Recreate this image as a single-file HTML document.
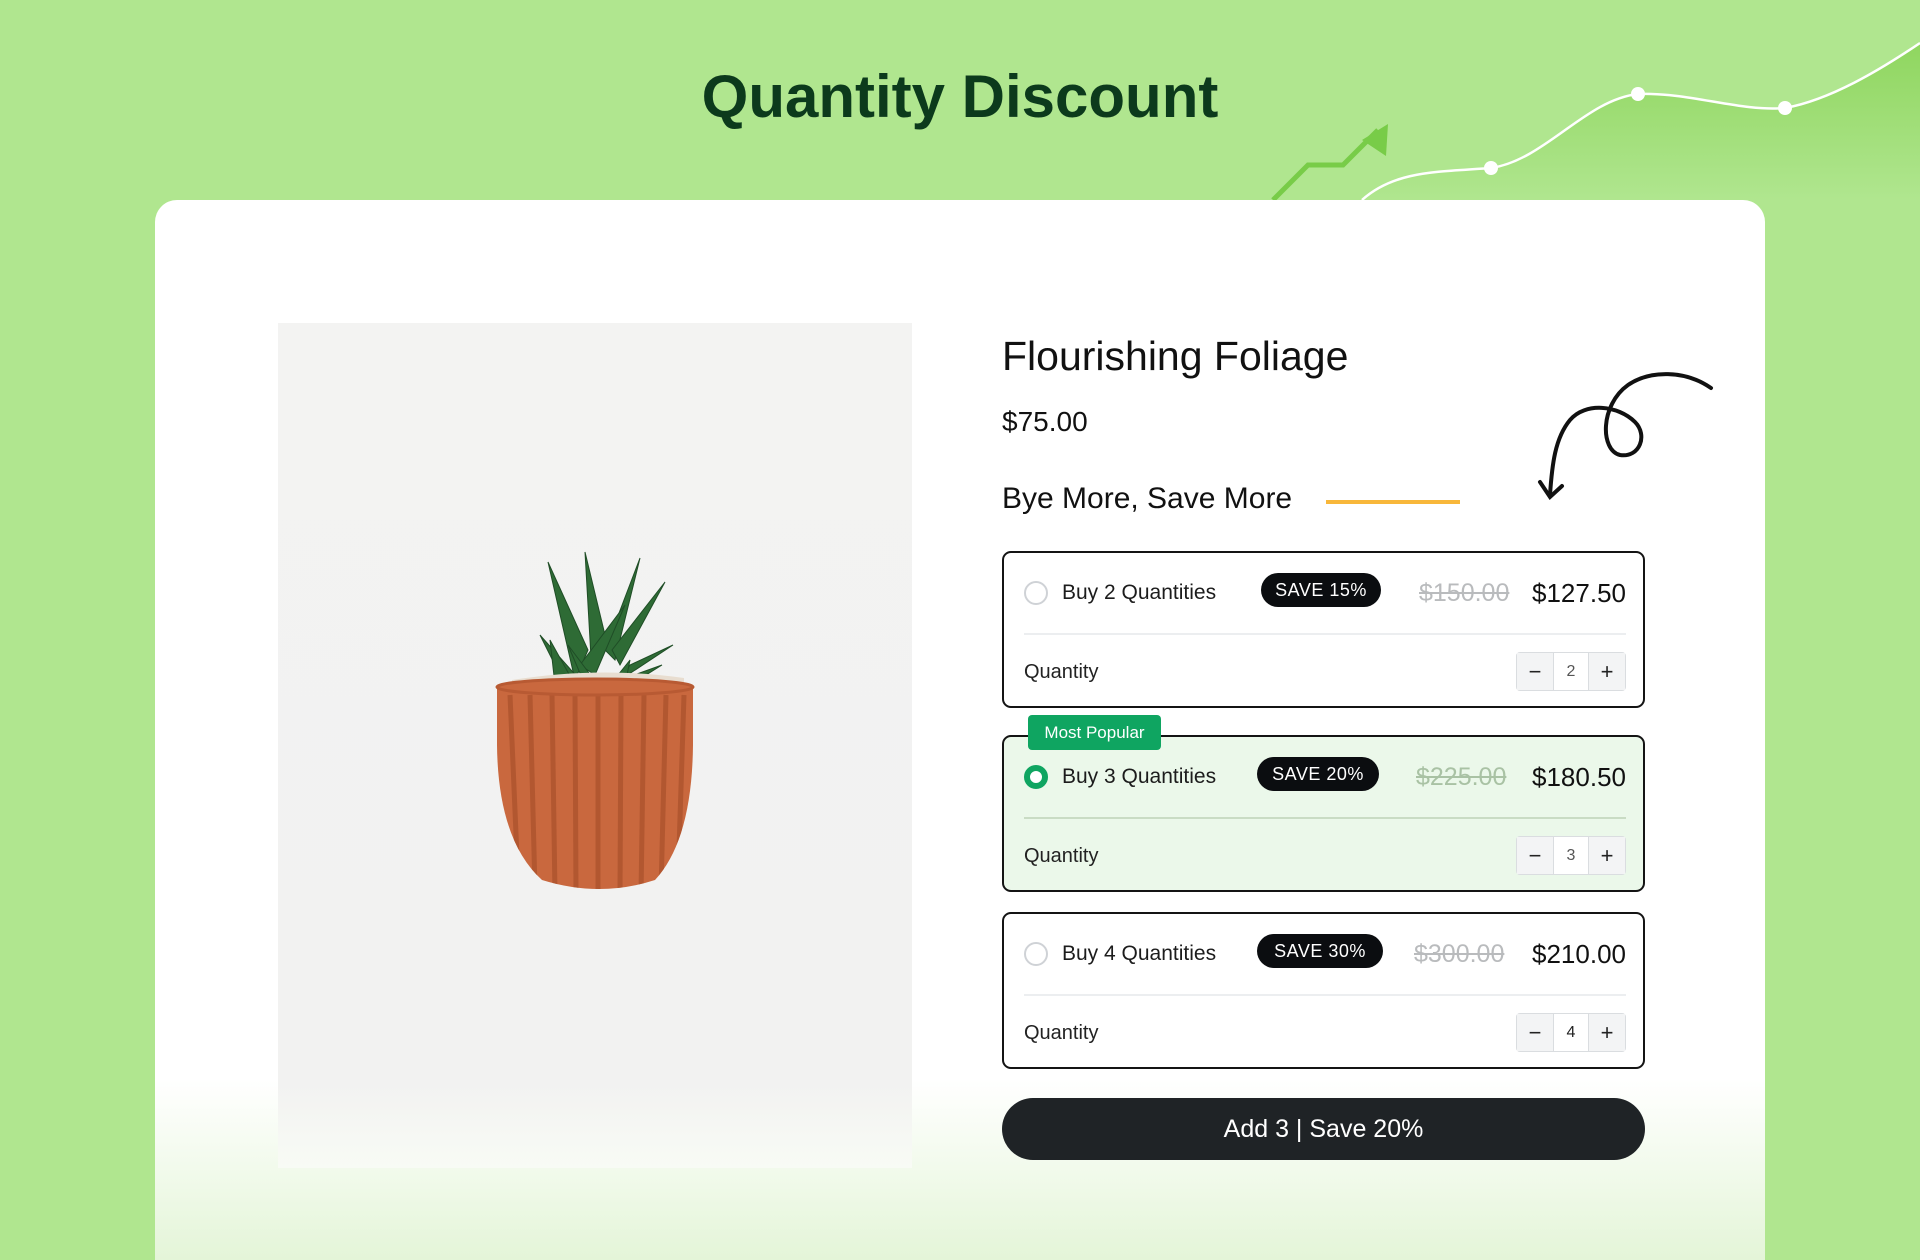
<!DOCTYPE html>
<html><head><meta charset="utf-8"><style>
*{margin:0;padding:0;box-sizing:border-box}
html,body{width:1920px;height:1260px;overflow:hidden}
body{background:#b0e68f;font-family:"Liberation Sans",sans-serif;position:relative;color:#111}
.abs{position:absolute}
h1{position:absolute;left:0;width:1920px;top:62px;text-align:center;font-size:60px;font-weight:bold;color:#0c3a1c}
.card{position:absolute;left:155px;top:200px;width:1610px;height:1060px;border-radius:22px 22px 0 0;background:linear-gradient(#fff 0,#fff 880px,#e4f5d8 1060px)}
.img{position:absolute;left:278px;top:323px;width:634px;height:845px;background:linear-gradient(#f3f3f2 0,#f2f2f1 760px,#f8fbf5 845px)}
.opt{position:absolute;left:1002px;width:643px;height:157px;border:2px solid #141414;border-radius:9px;background:#fff}
.radio{position:absolute;left:20px;top:28px;width:24px;height:24px;border:2px solid #cfd2d6;border-radius:50%}
.radio.on{border:6px solid #0fa561;background:#fff}
.lbl{position:absolute;left:58px;top:28px;font-size:21px;color:#1c1c1c}
.badge{position:absolute;top:20px;height:34px;border-radius:17px;background:#0b0d10;color:#fff;font-size:18px;line-height:34px;text-align:center;letter-spacing:0.5px}
.old{position:absolute;top:26px;font-size:25px;color:#b9bbbd;text-decoration:line-through}
.new{position:absolute;right:17px;top:25px;font-size:26px;color:#111}
.div{position:absolute;left:20px;right:17px;top:80px;height:2px;background:#eceef0}
.q{position:absolute;left:20px;top:108px;font-size:20px;color:#222}
.step{position:absolute;right:17px;top:99px;width:110px;height:39px;border:1px solid #dadde0;border-radius:4px;display:flex;background:#fff}
.step div{display:flex;align-items:center;justify-content:center;font-size:22px;color:#222}
.step .m,.step .p{width:36px;background:#f3f4f5}
.step .n{flex:1;border-left:1px solid #dadde0;border-right:1px solid #dadde0;font-size:16px;color:#555}
</style></head><body>
<svg class="abs" style="left:0;top:0" width="1920" height="200">
<defs><linearGradient id="g" x1="0" y1="0" x2="0" y2="1"><stop offset="0" stop-color="#8fd65f"/><stop offset="1" stop-color="#b0e68f"/></linearGradient></defs>
<path d="M1362 200 C1395 170 1440 172 1491 168 C1545 160 1585 100 1638 94 C1690 92 1740 112 1785 108 C1830 100 1880 70 1920 43 L1920 200 Z" fill="url(#g)"/>
<path d="M1362 200 C1395 170 1440 172 1491 168 C1545 160 1585 100 1638 94 C1690 92 1740 112 1785 108 C1830 100 1880 70 1920 43" fill="none" stroke="#fff" stroke-width="2.5"/>
<circle cx="1491" cy="168" r="7" fill="#fff"/><circle cx="1638" cy="94" r="7" fill="#fff"/><circle cx="1785" cy="108" r="7" fill="#fff"/>
<path d="M1273 200 L1308 165 L1343 165 L1378 130" fill="none" stroke="#78cc48" stroke-width="5"/>
<path d="M1362 140 L1388 124 L1386 156 Z" fill="#78cc48"/>
</svg>
<h1>Quantity Discount</h1>
<div class="card"></div>
<div class="img"></div>
<svg class="abs" style="left:480px;top:540px" width="240" height="360" viewBox="0 0 240 360">
<defs><clipPath id="pc"><path d="M17 145 Q120 132 213 145 L213 205 Q212 300 175 340 Q120 358 62 340 Q18 300 17 205Z"/></clipPath></defs>
<g fill="#2e6b35" stroke="#1f4d26" stroke-width="1">
<path d="M68 22 L108 110 L95 140Z"/><path d="M105 12 L125 95 L112 135Z"/><path d="M160 18 L135 120 L125 110Z"/>
<path d="M185 42 L140 125 L132 110Z"/><path d="M193 105 L140 140 L150 125Z"/><path d="M60 95 L100 140 L85 145Z"/>
<path d="M70 100 L95 145 L75 145Z"/><path d="M145 65 L115 135 L100 125Z"/><path d="M88 105 L118 145 L105 145Z"/>
<path d="M150 120 L145 145 L130 145Z" /><path d="M182 125 L150 145 L140 140Z"/>
</g>
<path d="M32 140 Q120 126 204 138 L204 150 L32 150Z" fill="#e8ddd0"/>
<path d="M17 145 Q120 132 213 145 L213 205 Q212 300 175 340 Q120 358 62 340 Q18 300 17 205Z" fill="#c9683e"/>
<g stroke="#a8502c" stroke-width="5" opacity="0.7" clip-path="url(#pc)">
<line x1="30" y1="155" x2="38" y2="340"/><line x1="50" y1="155" x2="55" y2="350"/><line x1="72" y1="155" x2="75" y2="355"/>
<line x1="95" y1="155" x2="96" y2="355"/><line x1="118" y1="155" x2="118" y2="355"/><line x1="141" y1="155" x2="140" y2="355"/>
<line x1="164" y1="155" x2="161" y2="355"/><line x1="186" y1="155" x2="181" y2="350"/><line x1="204" y1="155" x2="198" y2="340"/>
</g>
<ellipse cx="115" cy="147" rx="98" ry="8" fill="none" stroke="#b85a33" stroke-width="3"/>
</svg>
<div class="abs" style="left:1002px;top:333px;font-size:41px;color:#111">Flourishing Foliage</div>
<div class="abs" style="left:1002px;top:406px;font-size:28px;color:#111">$75.00</div>
<div class="abs" style="left:1002px;top:482px;font-size:30px;color:#111">Bye More, Save More</div>
<div class="abs" style="left:1326px;top:500px;width:134px;height:4px;background:#f8b73a"></div>
<svg class="abs" style="left:1500px;top:360px" width="230" height="150">
<path d="M211 28 C185 10 150 10 128 25 C100 45 100 90 120 95 C140 98 148 75 135 62 C118 45 85 42 70 60 C55 78 52 105 50 135" fill="none" stroke="#111" stroke-width="4" stroke-linecap="round"/>
<path d="M40 122 L50 137 L62 126" fill="none" stroke="#111" stroke-width="4" stroke-linecap="round"/>
</svg>

<div class="opt" style="top:551px">
<div class="radio"></div><div class="lbl">Buy 2 Quantities</div>
<div class="badge" style="left:257px;width:120px">SAVE 15%</div>
<div class="old" style="left:415px">$150.00</div><div class="new">$127.50</div>
<div class="div"></div><div class="q">Quantity</div>
<div class="step"><div class="m">−</div><div class="n">2</div><div class="p">+</div></div>
</div>
<div class="opt" style="top:735px;background:#ebf8ea">
<div class="radio on"></div><div class="lbl">Buy 3 Quantities</div>
<div class="badge" style="left:253px;width:122px">SAVE 20%</div>
<div class="old" style="left:412px;color:#a9c2a4">$225.00</div><div class="new">$180.50</div>
<div class="div" style="background:#c9dcc4"></div><div class="q">Quantity</div>
<div class="step"><div class="m">−</div><div class="n">3</div><div class="p">+</div></div>
</div>
<div class="abs" style="left:1028px;top:715px;width:133px;height:35px;background:#0fa561;border-radius:4px;color:#fff;font-size:17px;line-height:35px;text-align:center">Most Popular</div>
<div class="opt" style="top:912px">
<div class="radio"></div><div class="lbl">Buy 4 Quantities</div>
<div class="badge" style="left:253px;width:126px">SAVE 30%</div>
<div class="old" style="left:410px">$300.00</div><div class="new">$210.00</div>
<div class="div"></div><div class="q">Quantity</div>
<div class="step"><div class="m">−</div><div class="n" style="color:#222">4</div><div class="p">+</div></div>
</div>
<div class="abs" style="left:1002px;top:1098px;width:643px;height:62px;border-radius:31px;background:#1f2326;color:#fff;font-size:25px;line-height:62px;text-align:center">Add 3 | Save 20%</div>
</body></html>
